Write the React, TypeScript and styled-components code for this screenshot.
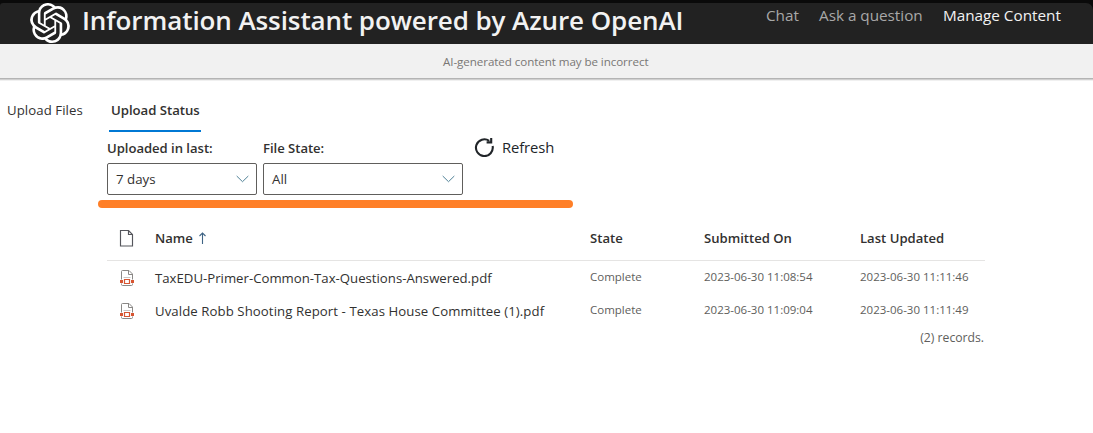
import React from "react";
import styled, { createGlobalStyle } from "styled-components";
import { SiOpenai } from "react-icons/si";

const Global = createGlobalStyle`
  * { box-sizing: border-box; }
  body { margin: 0; background: #fff; color: #323130; font-family: "Segoe UI", "Open Sans", "Noto Sans", sans-serif; }
`;

const Page = styled.div`
  display: flex;
  flex-direction: column;
  height: 433px;
  overflow: hidden;
`;
const TopStrip = styled.div`
  background: #0a0a0a;
  padding-top: 3px;
`;
const Header = styled.header`
  display: flex;
  align-items: flex-start;
  height: 41px;
  padding-left: 30px;
  padding-right: 32px;
  background: #222;
  color: #f2f2f2;
  border-radius: 3px 7px 0 0;
`;
const Logo = styled(SiOpenai)`
  width: 40px;
  height: 40px;
  color: #fff;
  flex: none;
`;
const Title = styled.h1`
  margin: 0 0 0 12px;
  font-size: 26px;
  line-height: 35px;
  font-weight: 600;
  white-space: nowrap;
  letter-spacing: -0.09px;
`;
const Nav = styled.nav`
  display: flex;
  gap: 20px;
  margin-left: auto;
`;
const NavLink = styled.a<{ $active?: boolean; $w: number }>`
  width: ${(p) => p.$w}px;
  font-size: 15.3px;
  line-height: 25px;
  white-space: nowrap;
  letter-spacing: -0.02px;
  color: ${(p) => (p.$active ? "#f2f2f2" : "#a8a8a8")};
`;
const Notice = styled.div`
  height: 34px;
  flex: none;
  padding-left: 443px;
  background: #f1f1f1;
  color: #797775;
  font-size: 11.6px;
  line-height: 36px;
  letter-spacing: -0.07px;
  box-shadow: 0 1px 0 #b4b4b4, 0 2px 0 #d0d0d0, 0 3px 0 #f0f0f0;
`;
const Tabs = styled.div`
  display: flex;
  gap: 18px;
  height: 44px;
  margin-top: 10px;
`;
const Tab = styled.button<{ $active?: boolean; $w: number }>`
  width: ${(p) => p.$w}px;
  height: 44px;
  padding: 2px 0 0 ${(p) => (p.$active ? 2 : 7)}px;
  border: 0;
  border-bottom: 2px solid ${(p) => (p.$active ? "#0078d4" : "transparent")};
  background: none;
  color: #323130;
  font: ${(p) => (p.$active ? 600 : 400)} 13.2px "Segoe UI", "Open Sans", sans-serif;
  text-align: left;
  white-space: nowrap;
  letter-spacing: ${(p) => (p.$active ? -0.03 : 0.08)}px;
`;
const Filters = styled.div`
  display: flex;
  gap: 6px;
  height: 63px;
  padding-left: 107px;
`;
const Field = styled.div<{ $w: number }>`
  width: ${(p) => p.$w}px;
`;
const Label = styled.div`
  height: 31px;
  font-size: 13.1px;
  line-height: 32px;
  font-weight: 600;
  letter-spacing: -0.03px;
`;
const Select = styled.div`
  display: flex;
  align-items: center;
  justify-content: space-between;
  height: 32px;
  padding: 0 7px 0 8px;
  border: 1px solid #605e5c;
  border-radius: 2px;
  font-size: 13.3px;
`;
const Refresh = styled.div`
  display: flex;
  align-items: center;
  gap: 7px;
  height: 30px;
  margin-left: 5px;
  font-size: 14.8px;
  color: #212529;
  letter-spacing: -0.1px;
`;
const Marker = styled.div`
  width: 475px;
  height: 8px;
  margin: 5px 0 0 98px;
  border-radius: 4px;
  background: #ff7f27;
`;
const Table = styled.div`
  width: 878px;
  margin: 8px 0 0 107px;
`;
const Row = styled.div<{ $head?: boolean }>`
  display: grid;
  grid-template-columns: 48px 435px 114px 156px 1fr;
  align-items: center;
  height: ${(p) => (p.$head ? 45 : 33)}px;
  border-bottom: ${(p) => (p.$head ? "1px solid #e5e4e3" : "0")};
`;
const IconCell = styled.div`
  display: flex;
  padding-left: 12px;
`;
const HeadCell = styled.div`
  display: flex;
  align-items: center;
  gap: 5px;
  font-size: 13.1px;
  font-weight: 600;
`;
const NameCell = styled.div<{ $ls: number }>`
  font-size: 13.2px;
  white-space: nowrap;
  letter-spacing: ${(p) => p.$ls}px;
`;
const Cell = styled.div`
  padding-bottom: 2px;
  font-size: 11.5px;
  color: #605e5c;
  white-space: nowrap;
`;
const Records = styled.div`
  padding-right: 1px;
  font-size: 12.2px;
  line-height: 22px;
  color: #605e5c;
  text-align: right;
`;

const Chevron = () => (
  <svg width="13" height="8" viewBox="0 0 13 8" fill="none" stroke="#4f8096">
    <path d="M.7 1 6.5 6.7 12.3 1" />
  </svg>
);
const RefreshIcon = () => (
  <svg width="21" height="20" viewBox="0 0 21 20" fill="none" stroke="#212529" strokeWidth="2.1">
    <path d="M15.2 3.8A8.4 8.4 0 1 0 18.6 9" />
    <path d="M17.2 1v4.4h-4.6" />
  </svg>
);
const PageIcon = () => (
  <svg width="15" height="17" viewBox="0 0 15 17" fill="none" stroke="#55565c">
    <path d="M1.5.5h8l4 4v11.5h-12zM9.5.5v4h4" strokeWidth="1.15" />
  </svg>
);
const PdfIcon = () => (
  <svg width="16" height="17" viewBox="0 0 16 17" fill="none">
    <path d="M2.5 10.5v-8q0-1 1-1H10L13.5 5v5.5M9.5 1.5v4h4M2.5 14.5v1q0 1 1 1h9q1 0 1-1v-1" stroke="#8a8886" />
    <path d="M4.5 8.5h7" stroke="#c8c6c4" />
    <path d="M5.5 10.5h5v4h-5z" stroke="#d65532" strokeWidth="1.2" />
    <path d="M1 11h3v3H1zM12 11h3v3h-3z" fill="#d65532" />
  </svg>
);
const ArrowUp = () => (
  <svg width="9" height="12" viewBox="0 0 9 12" fill="none" stroke="#3f6485">
    <path d="M4.5 12V1M1.5 4 4.5 1 7.5 4" strokeWidth="1.1" />
  </svg>
);

const files = [
  { name: "TaxEDU-Primer-Common-Tax-Questions-Answered.pdf", ls: 0, submitted: "2023-06-30 11:08:54", updated: "2023-06-30 11:11:46" },
  { name: "Uvalde Robb Shooting Report - Texas House Committee (1).pdf", ls: 0.08, submitted: "2023-06-30 11:09:04", updated: "2023-06-30 11:11:49" },
];

export default function App() {
  return (
    <Page>
      <Global />
      <TopStrip>
        <Header>
          <Logo />
          <Title>Information Assistant powered by Azure OpenAI</Title>
          <Nav>
            <NavLink $w={33}>Chat</NavLink>
            <NavLink $w={104}>Ask a question</NavLink>
            <NavLink $w={118} $active>Manage Content</NavLink>
          </Nav>
        </Header>
      </TopStrip>
      <Notice>AI-generated content may be incorrect</Notice>
      <Tabs>
        <Tab $w={91}>Upload Files</Tab>
        <Tab $w={92} $active>Upload Status</Tab>
      </Tabs>
      <Filters>
        <Field $w={150}>
          <Label>Uploaded in last:</Label>
          <Select>7 days<Chevron /></Select>
        </Field>
        <Field $w={200}>
          <Label>File State:</Label>
          <Select>All<Chevron /></Select>
        </Field>
        <Refresh><RefreshIcon />Refresh</Refresh>
      </Filters>
      <Marker />
      <Table>
        <Row $head>
          <IconCell><PageIcon /></IconCell>
          <HeadCell>Name<ArrowUp /></HeadCell>
          <HeadCell>State</HeadCell>
          <HeadCell>Submitted On</HeadCell>
          <HeadCell>Last Updated</HeadCell>
        </Row>
        {files.map((f) => (
          <Row key={f.name}>
            <IconCell><PdfIcon /></IconCell>
            <NameCell $ls={f.ls}>{f.name}</NameCell>
            <Cell>Complete</Cell>
            <Cell>{f.submitted}</Cell>
            <Cell>{f.updated}</Cell>
          </Row>
        ))}
        <Records>(2) records.</Records>
      </Table>
    </Page>
  );
}
